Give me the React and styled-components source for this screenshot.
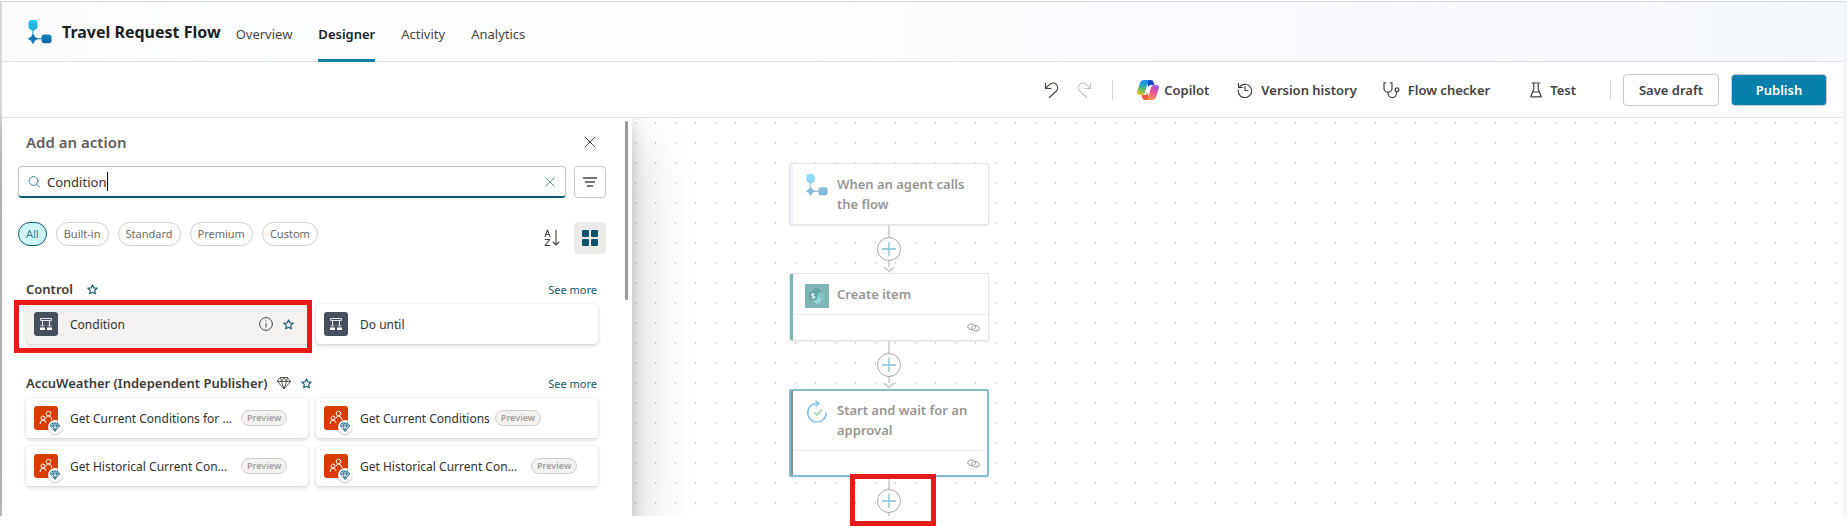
import React from "react";
import styled, { createGlobalStyle, css } from "styled-components";

const Global = createGlobalStyle`
  *, *::before, *::after { box-sizing: border-box; }
  body { margin: 0; background: #fff; font-family: "Segoe UI", "Noto Sans", "Open Sans", sans-serif; font-size: 13px; color: #323130; }
  button, input { font: inherit; color: inherit; margin: 0; }
  h1, h2, h3, p, ul { margin: 0; padding: 0; }
  svg { display: block; flex: none; }
`;

const Shell = styled.div`
  border: solid #d9d9dc;
  border-width: 1px 4px 0 2px;
  border-right-color: #f3f3f4;
  margin-top: 1px;
`;

const Chrome = styled.div`
  position: relative;
  z-index: 2;
  background: #fff;
`;

const BottomEdge = styled.div`
  position: relative;
  z-index: 2;
  height: 10px;
  background: #fff;
`;

const Header = styled.header`
  display: flex;
  align-items: center;
  height: 60px;
  padding-left: 26px;
  border-bottom: 1px solid #dedede;
  background: linear-gradient(90deg, #fcfcff, #fcfefe 30%, #f8fafe 75%, #f5f8fc);
`;

const Title = styled.h1`
  margin-left: 10px;
  font-size: 16px;
  font-weight: 700;
  line-height: 24px;
  white-space: nowrap;
  color: #201f1e;
`;

const Tabs = styled.nav`
  display: flex;
  align-self: stretch;
  gap: 26px;
  margin-left: 15px;
`;

const Tab = styled.a`
  display: flex;
  align-items: center;
  margin-bottom: -1px;
  padding-top: 7px;
  border-bottom: 3px solid transparent;
  text-decoration: none;
  color: #484644;
  ${(p) => p.$active && css`
    border-color: #0880ad;
    border-radius: 1px;
    font-weight: 600;
    color: #201f1e;
  `}
`;

const Toolbar = styled.div`
  display: flex;
  align-items: center;
  justify-content: flex-end;
  height: 56px;
  padding-right: 16px;
  border-bottom: 1px solid #dedede;
`;

const IconButton = styled.button`
  display: grid;
  place-items: center;
  width: ${(p) => p.$size || 32}px;
  height: ${(p) => p.$size || 32}px;
  padding: 0;
  border: 1px solid ${(p) => (p.$outlined ? "#c8c6c4" : "transparent")};
  border-radius: 4px;
  background: ${(p) => (p.$pressed ? "#edebe9" : "transparent")};
  color: ${(p) => p.$color || "#484644"};
`;

const ToolButton = styled.button`
  display: flex;
  align-items: center;
  gap: ${(p) => p.$gap || 8}px;
  height: 32px;
  padding: 0;
  margin-left: ${(p) => p.$before || 26}px;
  border: 0;
  background: none;
  font-weight: 600;
  white-space: nowrap;
  color: #424242;
`;

const Rule = styled.span`
  width: 1px;
  height: 20px;
  margin-left: ${(p) => p.$before}px;
  background: #d6d6d6;
`;

const CommandButton = styled.button`
  width: 96px;
  height: 32px;
  padding: 0;
  margin-left: 12px;
  border: 1px solid #c8c8c8;
  border-radius: 4px;
  font-weight: 600;
  background: ${(p) => (p.$primary ? "#0880ad" : "#fff")};
  color: ${(p) => (p.$primary ? "#fff" : "#424242")};
`;

const Workspace = styled.main`
  display: flex;
`;

const Panel = styled.aside`
  position: relative;
  z-index: 1;
  flex: none;
  width: 630px;
  padding: 8px 26px 30px 16px;
  background: #fff;
  box-shadow: 0 26px 58px rgba(0, 0, 0, 0.22), 0 5px 14px rgba(0, 0, 0, 0.18);
`;

const ScrollThumb = styled.span`
  position: absolute;
  top: 3px;
  right: 4px;
  width: 3px;
  height: 179px;
  border-radius: 2px;
  background: #9a9a9a;
`;

const PanelHead = styled.div`
  display: flex;
  align-items: center;
  justify-content: space-between;
  height: 32px;
  margin-bottom: 8px;
  padding-left: 8px;
`;

const PanelTitle = styled.h2`
  font-size: 15px;
  font-weight: 600;
  color: #605e5c;
`;

const SearchRow = styled.div`
  display: flex;
  gap: 8px;
`;

const SearchBox = styled.label`
  display: flex;
  flex: 1;
  align-items: center;
  gap: 7px;
  height: 32px;
  padding: 0 1px 0 9px;
  border: 1px solid #c0c0c0;
  border-bottom: 2px solid #0f5a74;
  border-radius: 4px;
  color: #3d7f96;
`;

const SearchField = styled.div`
  display: flex;
  flex: 1;
  align-items: center;
`;

const SearchInput = styled.input`
  width: 60px;
  padding: 0;
  border: 0;
  outline: 0;
  field-sizing: content;
  background: none;
  color: #323130;
`;

const Caret = styled.span`
  width: 1px;
  height: 19px;
  background: #000;
`;

const FilterRow = styled.div`
  display: flex;
  align-items: flex-start;
  height: 32px;
  margin-top: 24px;
`;

const Chips = styled.div`
  display: flex;
  flex: 1;
  gap: 9px;
`;

const SortTools = styled.div`
  display: flex;
  gap: 6px;
`;

const Chip = styled.button`
  height: 24px;
  padding: 0 7px;
  border: 1px solid ${(p) => (p.$active ? "#0f5a74" : "#d1d1d1")};
  border-radius: 12px;
  background: ${(p) => (p.$active ? "#cdf5fa" : "#fff")};
  color: ${(p) => (p.$active ? "#3d7f96" : "#6b6967")};
  font-size: 11px;
  line-height: 20px;
`;

const Group = styled.section`
  margin-top: ${(p) => p.$before}px;
  padding: 0 8px;
`;

const GroupHead = styled.div`
  display: flex;
  align-items: center;
  height: 20px;
  margin-bottom: 5px;
`;

const GroupTitle = styled.h3`
  font-size: 13px;
  font-weight: 600;
  color: #3b3a39;
`;

const HeadMark = styled.span`
  margin-left: ${(p) => p.$before}px;
  color: #484644;
`;

const MoreLink = styled.a`
  margin: 0 1px 0 auto;
  font-size: 11px;
  text-decoration: none;
  color: #0f5a6b;
`;

const CardGrid = styled.div`
  position: relative;
  display: grid;
  grid-template-columns: 1fr 1fr;
  gap: 8px;
`;

const Card = styled.div`
  display: flex;
  align-items: center;
  height: 40px;
  padding: 0 14px 0 8px;
  border-radius: 4px;
  background: ${(p) => (p.$hover ? "#f3f2f1" : "#fff")};
  box-shadow: 0 2px 4px rgba(0, 0, 0, 0.14), 0 0 2px rgba(0, 0, 0, 0.12);
`;

const CardIcon = styled.span`
  position: relative;
  display: grid;
  place-items: center;
  flex: none;
  width: 24px;
  height: 24px;
  margin-right: 12px;
  border-radius: 3px;
  background: ${(p) => p.$color};
`;

const PremiumMark = styled.span`
  position: absolute;
  left: 14px;
  top: 14px;
  display: grid;
  place-items: center;
  width: 14px;
  height: 14px;
  border-radius: 50%;
  background: #fff;
  box-shadow: 0 1px 2px rgba(0, 0, 0, 0.25);
  color: #2c7088;
`;

const CardName = styled.span`
  min-width: ${(p) => (p.$long ? 166 : 0)}px;
  font-size: 12px;
  white-space: nowrap;
  color: #323130;
`;

const CardActions = styled.span`
  display: flex;
  align-items: center;
  gap: 10px;
  margin-left: auto;
  color: #484644;
`;

const Badge = styled.span`
  flex: none;
  height: 16px;
  margin-left: 5px;
  padding: 0 5px;
  border: 1px solid #d2d0ce;
  border-radius: 8px;
  background: #f3f2f1;
  font-size: 9px;
  font-weight: 600;
  line-height: 14px;
  color: #a19f9d;
`;

const CardHighlight = styled.span`
  position: absolute;
  left: -12px;
  top: -4px;
  width: calc(50% + 12px);
  height: 53px;
  border: 5px solid #e81b1b;
  pointer-events: none;
`;

const Canvas = styled.section`
  flex: 1;
  min-width: 0;
  padding: 45px 0 0 157px;
  background:
    linear-gradient(90deg, #fff 19px, transparent 0) 4px 0 / 20px 20px,
    linear-gradient(#fff 18px, #cfcfcf 0) 0 6px / 20px 20px;
`;

const Flow = styled.div`
  position: relative;
  z-index: 3;
  display: flex;
  flex-direction: column;
  align-items: center;
  width: 200px;
`;

const Node = styled.article`
  align-self: stretch;
  background: #fff;
  border: ${(p) => (p.$selected ? "2px solid #87bcd0" : "1px solid #e4e4e4")};
  border-radius: 2px;
  box-shadow: inset ${(p) => (p.$selected ? 2 : 3)}px 0 ${(p) => p.$accent}, 0 1px 2px rgba(0, 0, 0, 0.08);
`;

const NodeBody = styled.div`
  display: grid;
  grid-template-columns: 24px 1fr;
  align-items: start;
  justify-items: center;
  gap: 8px;
  min-height: ${(p) => p.$height}px;
  padding: ${(p) => (p.$selected ? "9px 0 0 14px" : "10px 0 0 15px")};
`;

const NodeTitle = styled.p`
  justify-self: start;
  max-width: 140px;
  font-weight: 600;
  line-height: 20px;
  color: #979593;
`;

const NodeFooter = styled.div`
  display: flex;
  justify-content: flex-end;
  align-items: center;
  height: ${(p) => (p.$selected ? 25 : 26)}px;
  margin-left: 3px;
  padding-right: ${(p) => (p.$selected ? 7 : 8)}px;
  border-top: 1px solid #eee;
`;

const Connector = styled.div`
  position: relative;
  display: flex;
  flex-direction: column;
  align-items: center;
  height: ${(p) => p.$height}px;
`;

const Line = styled.span`
  width: 2px;
  height: ${(p) => p.$length}px;
  background: #d6d4d4;
`;

const AddButton = styled.button`
  display: grid;
  place-items: center;
  flex: none;
  width: 24px;
  height: 24px;
  padding: 0;
  border: 1px solid #a8a8a8;
  border-radius: 50%;
  background: #fff;
`;

const AddHighlight = styled.span`
  position: absolute;
  left: -27px;
  top: -3px;
  width: 86px;
  height: 52px;
  border: 5px solid #e81b1b;
  pointer-events: none;
`;

const LastStep = styled(Connector)`
  width: 24px;
`;

const FlowLogo = ({ size = 24, faded }) => (
  <svg width={size} height={size} viewBox="0 0 24 24" opacity={faded ? 0.5 : 1}>
    <defs>
      <linearGradient id="flowTop" x1="0" y1="0" x2="0" y2="1"><stop stopColor="#27c4ec" /><stop offset="1" stopColor="#1ba6d8" /></linearGradient>
      <linearGradient id="flowLow" x1="0" y1="0" x2="0" y2="1"><stop stopColor="#1688c0" /><stop offset="1" stopColor="#0b62a2" /></linearGradient>
    </defs>
    <path d="M3.500 0h3q3 0 3 3v3.500q0 3-3 3.200L5 11.500 3.500 9.700q-3-.2-3-3.200V3q0-3 3-3Z" fill="url(#flowTop)" />
    <rect x="4.500" y="11" width="1" height="3" fill="#1ba6d8" />
    <path d="m5 13.500 1.800 3.500L10 18.800l-3.200 1.700L5 24l-1.800-3.500L0 18.800 3.200 17Z" fill="#1272af" stroke="#1272af" strokeWidth=".4" strokeLinejoin="round" />
    <path d="M9 18.300h4.500v-1q0-2.800 2.900-2.800h4.200q3 0 3 3v2.800q0 3-3 3h-4.200q-2.900 0-2.900-2.800v-1.200H9Z" fill="url(#flowLow)" />
  </svg>
);

const Stroke = ({ w = 16, h = w, box = "0 0 16 16", width = 1, children }) => (
  <svg width={w} height={h} viewBox={box} fill="none" stroke="currentColor" strokeWidth={width} strokeLinecap="round" strokeLinejoin="round">{children}</svg>
);

const Undo = () => <Stroke width={1.2}><path d="M1.500 1v5.500H7M1.700 6.300 5.500 2.600a4.700 4.700 0 0 1 6.900 6.400L5.300 15.500" /></Stroke>;
const Redo = () => <Stroke width={1.2}><path d="M14.500 1v5.500H9M14.300 6.300 10.500 2.600a4.700 4.700 0 0 0-6.900 6.400l7.100 6.500" /></Stroke>;

const CopilotLogo = () => (
  <svg width="22" height="20" viewBox="0 0 22 20">
    <defs>
      <linearGradient id="cpA" x1="0.600" y1="0" x2="0.300" y2="1"><stop stopColor="#1a8fe8" /><stop offset=".4" stopColor="#26a8c8" /><stop offset=".65" stopColor="#62bd5d" /><stop offset="1" stopColor="#f2c51c" /></linearGradient>
      <linearGradient id="cpB" x1="0.700" y1="0" x2="0.300" y2="1"><stop stopColor="#a453e6" /><stop offset=".5" stopColor="#ee5590" /><stop offset="1" stopColor="#ff9b50" /></linearGradient>
    </defs>
    <path d="M11 0h3q2 0 2.500 2l.8 3H14q-2 0-2.600 2L9 0Z" fill="#1646c2" />
    <path d="M11 20H8q-2 0-2.600-2l-.9-3H8q2 0 2.600-2l2.400 7Z" fill="#ee5638" />
    <path d="M6.500 0H13q-1.500.3-2 2L8 12.500Q7.200 15 5 15H2.500Q-.7 15 .2 11.500L3 3Q4 0 6.500 0Z" fill="url(#cpA)" />
    <path d="M15.500 20H9q1.500-.3 2-2L14 7.500Q14.800 5 17 5h2.500q3.200 0 2.300 3.500L19 17q-1 3-3.500 3Z" fill="url(#cpB)" />
  </svg>
);

const History = () => <Stroke width={1.2}><path d="M2.200 5.500A6.700 6.700 0 1 1 1.300 8M1.500 1.500v4h4M8 4.500v4h3" /></Stroke>;
const Stethoscope = () => <Stroke w={17} h={16} box="0 0 17 16" width={1.2}><path d="M2.500.8H1v5.400a4 4 0 0 0 8 0V.8H7.500M5 10.300v1a4.200 4.200 0 0 0 8.500 0v-1.600" /><circle cx="14" cy="7.700" r="1.900" /></Stroke>;
const Flask = () => <Stroke w={12} h={16} box="0 0 12 16" width={1.2}><path d="M2 1h8M3.800 1v6L.8 14.800h10.400L8.200 7V1M2.800 10h6.400" /></Stroke>;
const Cross = ({ size }) => <Stroke w={size} box="0 0 12 12"><path d="m1 1 10 10M11 1 1 11" /></Stroke>;
const Search = () => <Stroke w={12} box="0 0 12 12"><circle cx="5.500" cy="5" r="4.400" /><path d="m8.700 8.300 3 3" /></Stroke>;
const Filter = () => <Stroke w={14} h={10} box="0 0 14 10" width={1.3}><path d="M.5 1h13M2.500 5h9M4.500 9h5" /></Stroke>;
const Sort = () => <Stroke w={16} h={18} box="0 0 16 18" width={1.1}><path d="M1 7.500 3.500 1 6 7.500M1.800 5.500h3.400M1.200 10.500h4.500L1 16.500h5M12 1v15M9 13l3 3 3-3" /></Stroke>;
const Tiles = () => <svg width="16" height="16" viewBox="0 0 16 16" fill="#0b556a"><rect width="7" height="7" rx="1" /><rect x="9" width="7" height="7" rx="1" /><rect y="9" width="7" height="7" rx="1" /><rect x="9" y="9" width="7" height="7" rx="1" /></svg>;
const Star = () => <svg width="11" height="11" viewBox="0 0 12 12" fill="none" stroke="#1c5f78" strokeWidth="1.300" strokeLinejoin="round"><path d="m6 1 1.500 3.200 3.500.4-2.600 2.400.7 3.700L6 9 2.900 10.700l.7-3.700L1 4.600l3.500-.4Z" /></svg>;
const Info = () => <Stroke w={14} box="0 0 14 14"><circle cx="7" cy="7" r="6.400" /><path d="M7 6.500v3.500M7 4v.3" /></Stroke>;
const Gem = ({ size = 14, width = 0.9 }) => <Stroke w={size} box="0 0 14 14" width={width}><path d="M3.500 1.500h7l3 4L7 13 .5 5.500ZM.5 5.500h13M3.500 1.500l1 4L7 13l2.500-7.500 1-4M4.500 5.500 7 1.500l2.500 4" /></Stroke>;

const ControlGlyph = () => (
  <svg width="14" height="14" viewBox="0 0 14 14" fill="none" stroke="#e8eaed">
    <path d="M1.500 1.500h11v2h-11ZM3.500 3.500v5M10.500 3.500v5" />
    <path d="m1.500 8 2 1.500 2-1.500M8.500 8l2 1.500 2-1.500" strokeWidth=".9" />
    <path d="M1 10.500h5V13H1ZM8 10.500h5V13H8Z" fill="#fff" stroke="none" />
  </svg>
);

const PeopleGlyph = () => (
  <svg width="16" height="16" viewBox="0 0 16 16" fill="none" stroke="#fff" strokeWidth="1">
    <circle cx="10.500" cy="3.500" r="2.300" /><circle cx="5" cy="8" r="2" />
    <path d="M8 8.200q.8-2 2.500-2.200 3 .2 3.500 4M2 14q.2-3.700 3-4 2.700.3 3 3" />
  </svg>
);

const SharePointGlyph = () => (
  <svg width="24" height="24" viewBox="0 0 24 24">
    <rect width="24" height="24" rx="1" fill="#80b5b5" />
    <circle cx="11.500" cy="9" r="5" fill="#66a7aa" /><circle cx="16" cy="12.500" r="4" fill="#83c4c9" /><circle cx="12.500" cy="16.500" r="3.300" fill="#95d6dc" />
    <rect x="4" y="8" width="8" height="8" rx="1" fill="#5fa4a7" />
    <path d="M9.700 10.200Q7 9.200 6.800 10.800q0 1 1.500 1.300 1.500.4 1.300 1.300-.5 1.200-3 .4" fill="none" stroke="#fff" strokeWidth="1.200" />
  </svg>
);

const ApprovalGlyph = () => (
  <svg width="24" height="24" viewBox="0 0 24 24" fill="none" strokeWidth="1.600">
    <path d="M13 3.500A9.300 9.300 0 1 0 21.300 12.500" stroke="#87bfe8" />
    <path d="m10.500.8 3.300 2.800-3.300 3" stroke="#80c8f8" />
    <path d="m9 12 3 3 5-5.500" stroke="#9ad7ae" />
  </svg>
);

const LinkGlyph = () => (
  <svg width="13" height="9" viewBox="0 0 13 9" fill="none" stroke="#9c9a98">
    <path d="M6 6.300Q1 7 .7 3.500 1 .6 4.500 1q3.800.5 3.900 3 0 1.300-1.400 1.900" />
    <path d="M7 2.700q5-.7 5.300 2.800-.3 2.900-3.800 2.500-3.800-.5-3.900-3 0-1.300 1.400-1.900" />
  </svg>
);

const ArrowHead = () => <svg width="12" height="6" viewBox="0 0 12 6" fill="none" stroke="#d0cfcf" strokeWidth="2"><path d="M1 0l5 4.500L11 0" /></svg>;
const Plus = () => <svg width="14" height="14" viewBox="0 0 14 14" stroke="#83bfd4" strokeWidth="1.300"><path d="M7 0v14M0 7h14" /></svg>;

const Link = () => (
  <Connector $height={48}>
    <Line $length={12} />
    <AddButton aria-label="Insert a step"><Plus /></AddButton>
    <Line $length={6} />
    <ArrowHead />
  </Connector>
);

const Weather = ({ name, long }) => (
  <Card>
    <CardIcon $color="#da3b01"><PeopleGlyph /><PremiumMark><Gem size={10} width={1.3} /></PremiumMark></CardIcon>
    <CardName $long={long}>{name}</CardName>
    <Badge>Preview</Badge>
  </Card>
);

const filters = ["All", "Built-in", "Standard", "Premium", "Custom"];
const tabs = ["Overview", "Designer", "Activity", "Analytics"];

export default function App() {
  return (
    <>
      <Global />
      <Shell>
        <Chrome>
          <Header>
            <FlowLogo />
            <Title>Travel Request Flow</Title>
            <Tabs>
              {tabs.map((t) => <Tab key={t} href="#" $active={t === "Designer"}>{t}</Tab>)}
            </Tabs>
          </Header>
          <Toolbar>
            <IconButton aria-label="Undo"><Undo /></IconButton>
            <IconButton aria-label="Redo" $color="#c8c6c4"><Redo /></IconButton>
            <Rule $before={12} />
            <ToolButton $gap={5} $before={24}><CopilotLogo />Copilot</ToolButton>
            <ToolButton $before={28}><History />Version history</ToolButton>
            <ToolButton><Stethoscope />Flow checker</ToolButton>
            <ToolButton $before={40}><Flask />Test</ToolButton>
            <Rule $before={34} />
            <CommandButton>Save draft</CommandButton>
            <CommandButton $primary>Publish</CommandButton>
          </Toolbar>
        </Chrome>
        <Workspace>
          <Panel>
            <ScrollThumb />
            <PanelHead>
              <PanelTitle>Add an action</PanelTitle>
              <IconButton aria-label="Close"><Cross size={12} /></IconButton>
            </PanelHead>
            <SearchRow>
              <SearchBox>
                <Search />
                <SearchField><SearchInput aria-label="Search actions" defaultValue="Condition" /><Caret /></SearchField>
                <IconButton aria-label="Clear search" $size={28} $color="#3d7f96"><Cross size={10} /></IconButton>
              </SearchBox>
              <IconButton aria-label="Filter" $outlined><Filter /></IconButton>
            </SearchRow>
            <FilterRow>
              <Chips>
                {filters.map((f) => <Chip key={f} $active={f === "All"}>{f}</Chip>)}
              </Chips>
              <SortTools>
                <IconButton aria-label="Sort"><Sort /></IconButton>
                <IconButton aria-label="Grid view" $pressed><Tiles /></IconButton>
              </SortTools>
            </FilterRow>
            <Group $before={25}>
              <GroupHead>
                <GroupTitle>Control</GroupTitle>
                <HeadMark $before={14}><Star /></HeadMark>
                <MoreLink href="#">See more</MoreLink>
              </GroupHead>
              <CardGrid>
                <Card $hover>
                  <CardIcon $color="#484f5c"><ControlGlyph /></CardIcon>
                  <CardName>Condition</CardName>
                  <CardActions><Info /><Star /></CardActions>
                </Card>
                <Card>
                  <CardIcon $color="#484f5c"><ControlGlyph /></CardIcon>
                  <CardName>Do until</CardName>
                </Card>
                <CardHighlight />
              </CardGrid>
            </Group>
            <Group $before={29}>
              <GroupHead>
                <GroupTitle>AccuWeather (Independent Publisher)</GroupTitle>
                <HeadMark $before={10}><Gem /></HeadMark>
                <HeadMark $before={10}><Star /></HeadMark>
                <MoreLink href="#">See more</MoreLink>
              </GroupHead>
              <CardGrid>
                <Weather long name="Get Current Conditions for ..." />
                <Weather name="Get Current Conditions" />
                <Weather long name="Get Historical Current Con..." />
                <Weather long name="Get Historical Current Con..." />
              </CardGrid>
            </Group>
          </Panel>
          <Canvas>
            <Flow>
              <Node $accent="#eef5fc">
                <NodeBody $height={60}><FlowLogo size={22} faded /><NodeTitle>When an agent calls the flow</NodeTitle></NodeBody>
              </Node>
              <Link />
              <Node $accent="#80b5b5">
                <NodeBody $height={40}><SharePointGlyph /><NodeTitle>Create item</NodeTitle></NodeBody>
                <NodeFooter><LinkGlyph /></NodeFooter>
              </Node>
              <Link />
              <Node $selected $accent="#8c8a88">
                <NodeBody $height={59} $selected><ApprovalGlyph /><NodeTitle>Start and wait for an approval</NodeTitle></NodeBody>
                <NodeFooter $selected><LinkGlyph /></NodeFooter>
              </Node>
              <LastStep $height={39}>
                <Line $length={12} />
                <AddButton aria-label="Insert a step"><Plus /></AddButton>
                <Line $length={3} />
                <AddHighlight />
              </LastStep>
            </Flow>
          </Canvas>
        </Workspace>
      </Shell>
      <BottomEdge />
    </>
  );
}
